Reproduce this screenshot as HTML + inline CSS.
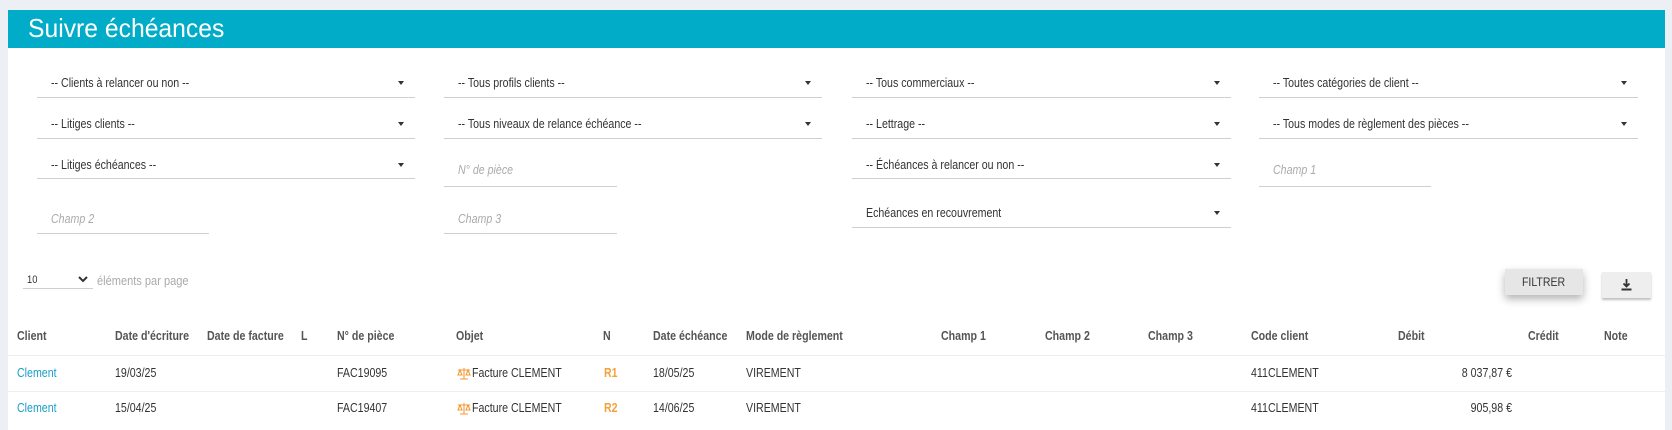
<!DOCTYPE html>
<html><head><meta charset="utf-8"><style>
*{margin:0;padding:0;box-sizing:border-box}
body{width:1672px;height:426px;background:#eceff4;position:relative;overflow:hidden;font-family:"Liberation Sans",sans-serif;color:#333}
.card{position:absolute;left:8px;top:10px;width:1657px;height:420px;background:#fff}
.hd{position:absolute;left:8px;top:10px;width:1657px;height:38px;background:#00acc8}
.hd span{position:absolute;left:20px;top:3px;font-family:"Liberation Sans",sans-serif;font-size:26px;color:#fff;transform:scaleX(.95);transform-origin:left}
.a{position:absolute;white-space:nowrap}
.sel{position:absolute;border-bottom:1px solid #cfcfcf;height:1px}
.t,.ph,.th,.td{transform:scaleX(.85);transform-origin:left}
.t{position:absolute;font-size:12.5px;color:#333;white-space:nowrap}
.ph{position:absolute;font-size:12.5px;color:#aaa;font-style:italic;white-space:nowrap}
.car{position:absolute;width:0;height:0;border-left:3.5px solid transparent;border-right:3.5px solid transparent;border-top:4px solid #333}
.th{position:absolute;top:329px;font-size:12.5px;font-weight:bold;color:#555;white-space:nowrap}
.td{position:absolute;font-size:12.5px;color:#333;white-space:nowrap}
.r{transform-origin:right}
.ln{position:absolute;left:8px;width:1657px;height:1px;background:#eee}
</style></head><body>
<div class="card"></div>
<div class="hd"><span>Suivre échéances</span></div>

<div class="t" style="left:51px;top:76px">-- Clients à relancer ou non --</div><div class="car" style="left:398px;top:81px"></div><div class="sel" style="left:37px;top:97px;width:378px"></div>
<div class="t" style="left:458px;top:76px">-- Tous profils clients --</div><div class="car" style="left:805px;top:81px"></div><div class="sel" style="left:444px;top:97px;width:378px"></div>
<div class="t" style="left:866px;top:76px">-- Tous commerciaux --</div><div class="car" style="left:1214px;top:81px"></div><div class="sel" style="left:852px;top:97px;width:379px"></div>
<div class="t" style="left:1273px;top:76px">-- Toutes catégories de client --</div><div class="car" style="left:1621px;top:81px"></div><div class="sel" style="left:1259px;top:97px;width:379px"></div>

<div class="t" style="left:51px;top:117px">-- Litiges clients --</div><div class="car" style="left:398px;top:122px"></div><div class="sel" style="left:37px;top:138px;width:378px"></div>
<div class="t" style="left:458px;top:117px">-- Tous niveaux de relance échéance --</div><div class="car" style="left:805px;top:122px"></div><div class="sel" style="left:444px;top:138px;width:378px"></div>
<div class="t" style="left:866px;top:117px">-- Lettrage --</div><div class="car" style="left:1214px;top:122px"></div><div class="sel" style="left:852px;top:138px;width:379px"></div>
<div class="t" style="left:1273px;top:117px">-- Tous modes de règlement des pièces --</div><div class="car" style="left:1621px;top:122px"></div><div class="sel" style="left:1259px;top:138px;width:379px"></div>

<div class="t" style="left:51px;top:158px">-- Litiges échéances --</div><div class="car" style="left:398px;top:163px"></div><div class="sel" style="left:37px;top:178px;width:378px"></div>
<div class="ph" style="left:458px;top:163px">N° de pièce</div><div class="sel" style="left:444px;top:186px;width:173px"></div>
<div class="t" style="left:866px;top:158px">-- Échéances à relancer ou non --</div><div class="car" style="left:1214px;top:163px"></div><div class="sel" style="left:852px;top:178px;width:379px"></div>
<div class="ph" style="left:1273px;top:163px">Champ 1</div><div class="sel" style="left:1259px;top:186px;width:172px"></div>

<div class="ph" style="left:51px;top:212px">Champ 2</div><div class="sel" style="left:37px;top:233px;width:172px"></div>
<div class="ph" style="left:458px;top:212px">Champ 3</div><div class="sel" style="left:444px;top:233px;width:173px"></div>
<div class="t" style="left:866px;top:206px">Echéances en recouvrement</div><div class="car" style="left:1214px;top:211px"></div><div class="sel" style="left:852px;top:227px;width:379px"></div>

<div class="td" style="left:27px;top:274px;font-size:11px">10</div>
<svg class="a" style="left:78px;top:275px" width="10" height="8" viewBox="0 0 10 8"><path d="M1 2 L5 6 L9 2" stroke="#333" stroke-width="2" fill="none"/></svg>
<div class="sel" style="left:23px;top:288px;width:70px"></div>
<div class="td" style="left:97px;top:273px;font-size:13px;color:#aaa">éléments par page</div>

<div class="a" style="left:1505px;top:269px;width:78px;height:26px;background:#e6e6e6;box-shadow:0 4px 8px rgba(0,0,0,.3);font-size:12px;color:#333;text-align:center;line-height:26px"><span style="display:inline-block;transform:scaleX(.88)">FILTRER</span></div>
<div class="a" style="left:1602px;top:272px;width:49px;height:26px;background:#eee;box-shadow:0 2px 2px rgba(0,0,0,.25)">
<svg style="position:absolute;left:19px;top:7px" width="11" height="12" viewBox="0 0 11 12"><path d="M5.5 0 V7 M2.5 4.5 L5.5 7.5 L8.5 4.5" stroke="#333" stroke-width="1.8" fill="none"/><rect x="0.5" y="9.5" width="10" height="2" fill="#333"/></svg></div>

<div class="th" style="left:17px">Client</div>
<div class="th" style="left:115px">Date d'écriture</div>
<div class="th" style="left:207px">Date de facture</div>
<div class="th" style="left:301px">L</div>
<div class="th" style="left:337px">N° de pièce</div>
<div class="th" style="left:456px">Objet</div>
<div class="th" style="left:603px">N</div>
<div class="th" style="left:653px">Date échéance</div>
<div class="th" style="left:746px">Mode de règlement</div>
<div class="th" style="left:941px">Champ 1</div>
<div class="th" style="left:1045px">Champ 2</div>
<div class="th" style="left:1148px">Champ 3</div>
<div class="th" style="left:1251px">Code client</div>
<div class="th" style="left:1398px">Débit</div>
<div class="th" style="left:1528px">Crédit</div>
<div class="th" style="left:1604px">Note</div>
<div class="ln" style="top:355px"></div>

<div class="td" style="left:17px;top:366px;color:#1a9fc7">Clement</div>
<div class="td" style="left:115px;top:366px">19/03/25</div>
<div class="td" style="left:337px;top:366px">FAC19095</div>
<svg class="a" style="left:457px;top:367px" width="14" height="13" viewBox="0 0 14 13"><path d="M7 1 V12 M3 12 H11 M1 3 H13 M3 3 L1 8 H5 Z M11 3 L9 8 H13 Z" stroke="#f39a3c" stroke-width="1.1" fill="none"/></svg>
<div class="td" style="left:472px;top:366px">Facture CLEMENT</div>
<div class="td" style="left:604px;top:366px;color:#f3a23c;font-weight:bold">R1</div>
<div class="td" style="left:653px;top:366px">18/05/25</div>
<div class="td" style="left:746px;top:366px">VIREMENT</div>
<div class="td" style="left:1251px;top:366px">411CLEMENT</div>
<div class="td r" style="left:1412px;top:366px;width:100px;text-align:right">8 037,87 €</div>
<div class="ln" style="top:391px"></div>

<div class="td" style="left:17px;top:401px;color:#1a9fc7">Clement</div>
<div class="td" style="left:115px;top:401px">15/04/25</div>
<div class="td" style="left:337px;top:401px">FAC19407</div>
<svg class="a" style="left:457px;top:402px" width="14" height="13" viewBox="0 0 14 13"><path d="M7 1 V12 M3 12 H11 M1 3 H13 M3 3 L1 8 H5 Z M11 3 L9 8 H13 Z" stroke="#f39a3c" stroke-width="1.1" fill="none"/></svg>
<div class="td" style="left:472px;top:401px">Facture CLEMENT</div>
<div class="td" style="left:604px;top:401px;color:#f3a23c;font-weight:bold">R2</div>
<div class="td" style="left:653px;top:401px">14/06/25</div>
<div class="td" style="left:746px;top:401px">VIREMENT</div>
<div class="td" style="left:1251px;top:401px">411CLEMENT</div>
<div class="td r" style="left:1412px;top:401px;width:100px;text-align:right">905,98 €</div>
</body></html>
